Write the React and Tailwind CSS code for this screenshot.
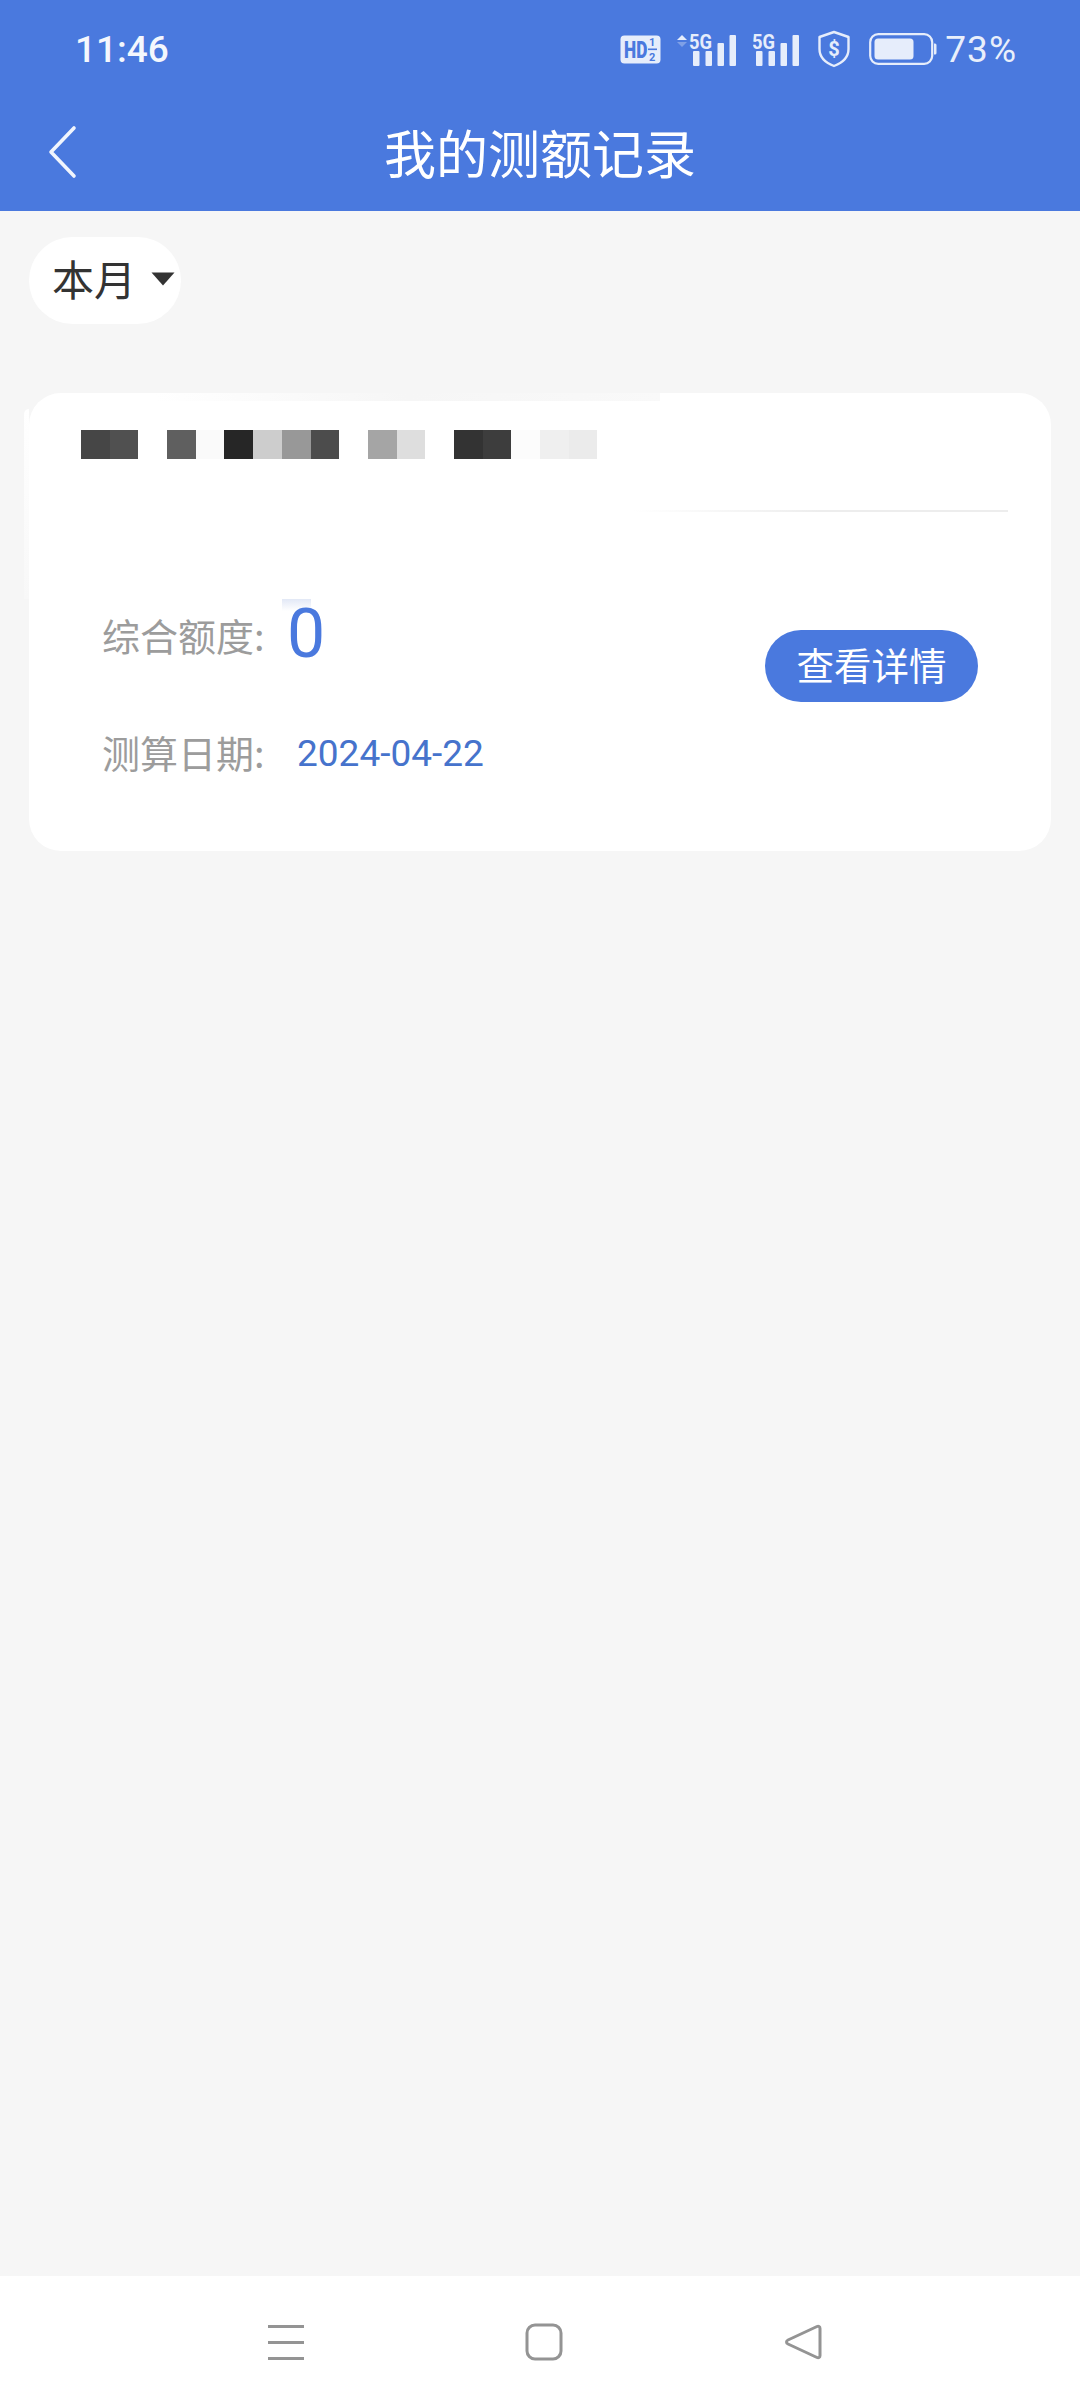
const cells = [
  ["#464646"], ["#505050"], [null], ["#5f5f5f"], ["#fafafa"], ["#262626"], ["#cdcdcd"], ["#989898"], ["#4c4c4c"],
  [null], ["#a5a5a5"], ["#dedede"], [null], ["#333333"], ["#3d3d3d"], ["#fcfcfc"], ["#efefef"], ["#ebebeb"],
];

const ICON = "#e6edfb";
const BLUE = "#4a79de";

function HdIcon() {
  return (
    <svg width="41" height="29" viewBox="0 0 41 29">
      <rect x="0.5" y="0.5" width="40" height="28" rx="4" fill={ICON} />
      <text transform="translate(4 23) scale(0.72 1)" fontFamily="Roboto, sans-serif" fontWeight="900" fontSize="24" fill={BLUE}>HD</text>
      <text x="29" y="11" fontFamily="Roboto, sans-serif" fontWeight="700" fontSize="11" fill={BLUE}>1</text>
      <rect x="28" y="13.5" width="9" height="1.6" fill={BLUE} />
      <text x="29" y="26" fontFamily="Roboto, sans-serif" fontWeight="700" fontSize="11" fill={BLUE}>2</text>
    </svg>
  );
}

function SignalIcon({ arrows }) {
  return (
    <svg className="-mt-[4px]" width={arrows ? 60 : 46} height="38" viewBox={arrows ? "0 -4 60 38" : "14 -4 46 38"}>
      {arrows && (
        <g>
          <path d="M1 8 L6 3 L11 8 Z" fill={ICON} />
          <path d="M1 10 L6 15 L11 10 Z" fill="#7fa0e6" />
        </g>
      )}
      <text x="13" y="16.5" fontFamily="Roboto, sans-serif" fontWeight="700" fontSize="20" fill={ICON} textLength="23" lengthAdjust="spacingAndGlyphs">5G</text>
      <rect x="17" y="19" width="6.5" height="15" rx="1" fill={ICON} />
      <rect x="29.5" y="19" width="6.5" height="15" rx="1" fill={ICON} />
      <rect x="41.5" y="11" width="6.5" height="23" rx="1" fill={ICON} />
      <rect x="53.5" y="3" width="6.5" height="31" rx="1" fill={ICON} />
    </svg>
  );
}

function ShieldIcon() {
  return (
    <svg width="34" height="38" viewBox="0 0 34 38">
      <path d="M17 2 L31.5 7 V19 C31.5 27.5 25 33 17 36 C9 33 2.5 27.5 2.5 19 V7 Z" fill="none" stroke={ICON} strokeWidth="2.4" strokeLinejoin="round" />
      <text x="17" y="25.5" textAnchor="middle" fontFamily="Roboto, sans-serif" fontWeight="700" fontSize="20" fill={ICON}>$</text>
    </svg>
  );
}

function BatteryIcon() {
  return (
    <svg width="68" height="32" viewBox="0 0 68 32">
      <rect x="1.2" y="1.2" width="62" height="29.6" rx="8" fill="none" stroke={ICON} strokeWidth="2.2" />
      <rect x="5.5" y="5.5" width="39" height="21" rx="3.5" fill={ICON} />
      <path d="M65 10.5 H66 A1.5 1.5 0 0 1 67.5 12 V20 A1.5 1.5 0 0 1 66 21.5 H65 Z" fill={ICON} />
    </svg>
  );
}

export default function App() {
  return (
    <div className="w-[1080px] h-[2408px] flex flex-col bg-[#f6f6f6] font-['Noto_Sans_CJK_SC','Noto_Sans',sans-serif] overflow-hidden">
      <header className="h-[211px] bg-[#4a79de] flex flex-col shrink-0">
        <div className="h-[98px] flex items-center justify-between pl-[75px] pr-[63px]">
          <span className="font-['Roboto',sans-serif] font-medium text-[37px] leading-none text-[#f4f7fd]">11:46</span>
          <div className="flex items-center">
            <HdIcon />
            <div className="ml-[15px] flex"><SignalIcon arrows /></div>
            <div className="ml-[17px] flex"><SignalIcon /></div>
            <div className="ml-[18px] flex"><ShieldIcon /></div>
            <div className="ml-[18px] flex"><BatteryIcon /></div>
            <span className="ml-[8px] font-['Roboto',sans-serif] text-[37px] leading-none tracking-[1px] text-[#e9effb]">73%</span>
          </div>
        </div>
        <div className="flex-1 grid grid-cols-[1fr_auto_1fr] items-center pb-[6px]">
          <div className="pl-[47px] flex items-center">
            <svg width="32" height="54" viewBox="0 0 32 54" fill="none">
              <path d="M27 3 L4 27 L27 51" stroke="#f1f5fd" strokeWidth="3.6" strokeLinecap="round" strokeLinejoin="round" />
            </svg>
          </div>
          <h1 className="text-[52px] leading-none font-normal text-white">我的测额记录</h1>
          <div />
        </div>
      </header>

      <main className="flex-1 relative">
        <div className="mt-[26px] ml-[29px] w-[152px] h-[87px] rounded-[44px] bg-white flex items-center pl-[23px]">
          <span className="text-[42px] leading-none text-[#333333] -mt-[5px]">本月</span>
          <svg className="ml-[15px] -mt-[3px]" width="24" height="14" viewBox="0 0 24 14">
            <path d="M0.5 0.5 H23.5 L12 13.5 Z" fill="#333333" />
          </svg>
        </div>

        <section className="relative mt-[69px] ml-[29px] w-[1022px] h-[458px] rounded-[32px] bg-white">
          <div className="absolute left-[126px] top-0 w-[505px] h-[8px] bg-gradient-to-r from-[#ffffff] via-[#f6f6f6] to-[#f9f9f9]" />
          <div className="absolute left-[-5px] top-[16px] w-[5px] h-[190px] rounded-tl-[16px] bg-gradient-to-b from-[#ffffff] to-[#f8f8f8]" />

          <div className="pt-[37px] pl-[52px] flex h-[66px]">
            {cells.map(([c], i) => (
              <div key={i} className="w-[28.7px] h-[29px]" style={c ? { backgroundColor: c } : undefined} />
            ))}
          </div>

          <div className="mt-[51px] ml-[604px] mr-[43px] h-[2px] bg-gradient-to-r from-[#ffffff] via-[#ededed] to-[#ededed]" />

          <div className="flex justify-between items-start pt-[85px] pl-[73px] pr-[73px]">
            <div className="flex flex-col gap-[36px]">
              <div className="h-[80px] flex items-center">
                <span className="w-[185px] text-[38px] leading-none text-[#9c9c9c] -mt-[5px]">综合额度:</span>
                <span className="relative font-['Roboto',sans-serif] text-[68px] leading-none text-[#4a79de] -mt-[6px]">
                  <span className="absolute left-[-5px] top-[-1px] w-[29px] h-[12px] bg-gradient-to-b from-[#e2e8f6] to-[#ffffff]" />
                  <span className="relative">0</span>
                </span>
              </div>
              <div className="h-[80px] flex items-center">
                <span className="w-[195px] text-[38px] leading-none text-[#9c9c9c] -mt-[3px]">测算日期:</span>
                <span className="font-['Roboto',sans-serif] text-[37px] leading-none text-[#4673cc]">2024-04-22</span>
              </div>
            </div>
            <button className="mt-[33px] w-[213px] h-[72px] rounded-[36px] bg-[#4a79de] text-[37.5px] leading-none text-white flex items-center justify-center pb-[5px]">
              查看详情
            </button>
          </div>
        </section>
      </main>

      <nav className="h-[132px] bg-white shrink-0 flex items-center justify-center pl-[8px]">
        <div className="flex items-center">
          <svg width="38" height="38" viewBox="0 0 38 38" fill="none">
            <path d="M1 3.5 H37 M1 19.5 H37 M1 35.5 H37" stroke="#949494" strokeWidth="3" />
          </svg>
          <svg className="ml-[220px]" width="38" height="38" viewBox="0 0 38 38" fill="none">
            <rect x="2" y="2" width="34" height="34" rx="8" stroke="#949494" strokeWidth="3" />
          </svg>
          <svg className="ml-[221px]" width="38" height="38" viewBox="0 0 38 38" fill="none">
            <path d="M33 3.5 C34.5 2.8 36 3.5 36 5.5 V32.5 C36 34.5 34.5 35.2 33 34.5 L4 21 C2 20 2 18 4 17 Z" stroke="#949494" strokeWidth="3" strokeLinejoin="round" />
          </svg>
        </div>
      </nav>
    </div>
  );
}
